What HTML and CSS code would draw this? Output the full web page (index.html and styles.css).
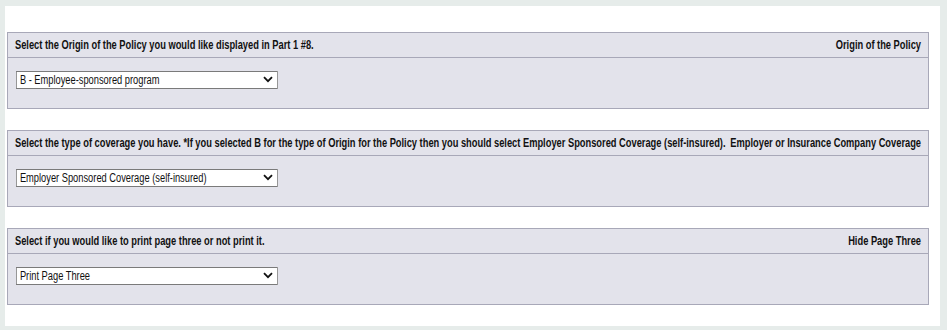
FILE: index.html
```html
<!DOCTYPE html>
<html>
<head>
<meta charset="utf-8">
<link rel="stylesheet" href="styles.css">
</head>
<body>
<div class="panel">
  <section class="group">
    <div class="group-head">
      <div class="head-row">
        <span class="question">Select the Origin of the Policy you would like displayed in Part 1 #8.</span>
        <span class="label">Origin of the Policy</span>
      </div>
    </div>
    <div class="group-body">
      <div class="select-wrap">
        <select class="select"><option>B - Employee-sponsored program</option></select>
        <svg class="chev" viewBox="0 0 10 7" width="10" height="7"><path d="M1 1.2 L5 5.2 L9 1.2" fill="none" stroke="#111" stroke-width="1.8"/></svg>
      </div>
    </div>
  </section>
  <section class="group">
    <div class="group-head">
      <div class="head-row">
        <span class="question">Select the type of coverage you have. *If you selected B for the type of Origin for the Policy then you should select Employer Sponsored Coverage (self-insured).</span>
        <span class="label">Employer or Insurance Company Coverage</span>
      </div>
    </div>
    <div class="group-body">
      <div class="select-wrap">
        <select class="select"><option>Employer Sponsored Coverage (self-insured)</option></select>
        <svg class="chev" viewBox="0 0 10 7" width="10" height="7"><path d="M1 1.2 L5 5.2 L9 1.2" fill="none" stroke="#111" stroke-width="1.8"/></svg>
      </div>
    </div>
  </section>
  <section class="group">
    <div class="group-head">
      <div class="head-row">
        <span class="question">Select if you would like to print page three or not print it.</span>
        <span class="label">Hide Page Three</span>
      </div>
    </div>
    <div class="group-body">
      <div class="select-wrap">
        <select class="select"><option>Print Page Three</option></select>
        <svg class="chev" viewBox="0 0 10 7" width="10" height="7"><path d="M1 1.2 L5 5.2 L9 1.2" fill="none" stroke="#111" stroke-width="1.8"/></svg>
      </div>
    </div>
  </section>
</div>
</body>
</html>
```
FILE: styles.css
```css
html, body {
  margin: 0;
  padding: 0;
}
body {
  background: #e6ecea;
  font-family: "Liberation Sans", Arial, sans-serif;
  color: #111;
  height: 330px;
  overflow: hidden;
}
.panel {
  background: #fff;
  margin: 6px 7px 0 5px;
  padding: 26px 11px 21px 2px;
  display: flex;
  flex-direction: column;
  gap: 21px;
}
.group {
  background: #e3e3eb;
  border: 1px solid #a8a8b8;
}
.group-head {
  height: 24px;
  border-bottom: 1px solid #a8a8b8;
  overflow: hidden;
}
.head-row {
  width: calc(100% / 0.775);
  height: 100%;
  box-sizing: border-box;
  transform: scaleX(0.775);
  transform-origin: 0 50%;
  display: flex;
  align-items: center;
  justify-content: space-between;
  padding: 0 9px 0 9px;
  font-weight: bold;
  font-size: 12px;
  white-space: nowrap;
}
.group-body {
  height: 50px;
  padding: 13px 0 0 8px;
  box-sizing: border-box;
}
.select-wrap {
  position: relative;
  width: 262px;
  height: 18px;
  overflow: hidden;
}
.select {
  appearance: none;
  -webkit-appearance: none;
  display: block;
  width: calc(262px / 0.775);
  height: 18px;
  margin: 0;
  border: 1px solid #7a7a7a;
  border-left-width: 1.3px;
  border-right-width: 1.3px;
  border-radius: 0;
  background: #fff;
  padding: 0 0 0 4px;
  font-family: "Liberation Sans", Arial, sans-serif;
  font-size: 12px;
  color: #111;
  box-sizing: border-box;
  transform: scaleX(0.775);
  transform-origin: 0 50%;
}
.chev {
  position: absolute;
  right: 5px;
  top: 5px;
  pointer-events: none;
}
```
